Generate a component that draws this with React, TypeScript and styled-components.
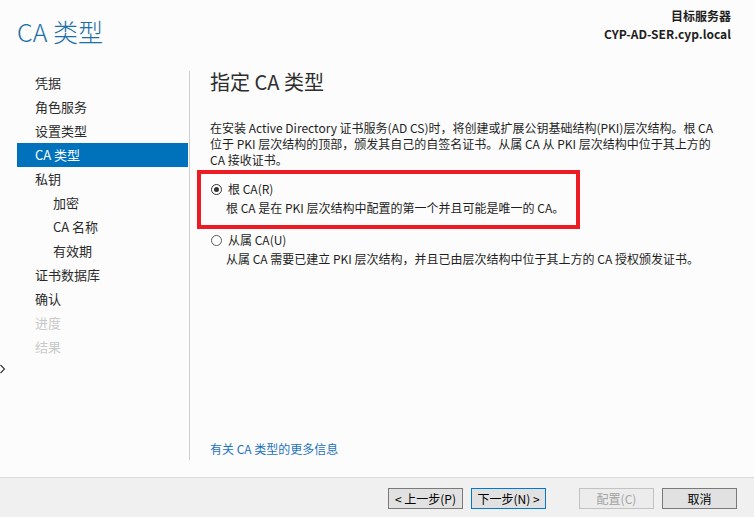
import styled, { createGlobalStyle } from "styled-components";

const GlobalStyle = createGlobalStyle`
  html, body {
    margin: 0;
    padding: 0;
    background: #fcfcfc;
  }
  body {
    font-family: "Noto Sans CJK SC", "Noto Sans", "Liberation Sans", sans-serif;
    color: #1e1e1e;
  }
`;

const Window = styled.div`
  width: 754px;
  height: 517px;
  display: flex;
  flex-direction: column;
  background: #fcfcfc;
  overflow: hidden;
`;

const Header = styled.div`
  height: 71px;
  display: flex;
  justify-content: space-between;
  align-items: flex-start;
  padding: 0 23px 0 17px;
  box-sizing: border-box;
`;

const PageTitle = styled.div`
  margin-top: 15px;
  font-size: 25px;
  line-height: 32px;
  font-weight: 300;
  color: #1b6fa6;
`;

const ServerInfo = styled.div`
  margin-top: 7px;
  text-align: right;
  font-size: 12px;
  line-height: 18px;
  font-weight: 700;
  color: #1e1e1e;
`;

const Body = styled.div`
  flex: 1;
  display: flex;
  min-height: 0;
`;

const Sidebar = styled.div`
  width: 190px;
  display: flex;
  flex-direction: column;
  margin-bottom: 17px;
  border-right: 1px solid #cfcfcf;
  box-sizing: border-box;
`;

const NavList = styled.div`
  display: flex;
  flex-direction: column;
  padding-left: 17px;
`;

const NavItem = styled.div<{ $level?: number; $active?: boolean; $disabled?: boolean }>`
  height: 24px;
  line-height: 24px;
  width: 171px;
  font-size: 13px;
  padding-left: ${(p) => (p.$level === 1 ? 36 : 18)}px;
  box-sizing: border-box;
  background: ${(p) => (p.$active ? "#0072bc" : "transparent")};
  color: ${(p) => (p.$active ? "#ffffff" : p.$disabled ? "#c9c9c9" : "#2b2b2b")};
`;

const Collapse = styled.div`
  margin-top: 5px;
  height: 10px;
  display: flex;
  align-items: center;
`;

const Main = styled.div`
  flex: 1;
  display: flex;
  flex-direction: column;
  padding: 0 20px 20px 20px;
`;

const SectionTitle = styled.div`
  font-size: 20px;
  line-height: 22px;
  color: #2e2e2e;
`;

const Intro = styled.p`
  margin: 27px 0 0 0;
  font-size: 12px;
  line-height: 16px;
  color: #1e1e1e;
`;

const Option = styled.div<{ $highlight?: boolean }>`
  margin: ${(p) => (p.$highlight ? "2px 0 0 -13px" : "3px 0 0 0")};
  width: ${(p) => (p.$highlight ? "383px" : "auto")};
  box-sizing: border-box;
  border: ${(p) => (p.$highlight ? "4px solid #ed1c24" : "none")};
  padding: ${(p) => (p.$highlight ? "7px 10px 9px 10px" : "0 0 0 1px")};
`;

const OptionRow = styled.label`
  display: flex;
  align-items: center;
  gap: 6px;
  font-size: 12px;
  line-height: 16px;
  color: #1e1e1e;
`;

const Radio = styled.span<{ $checked?: boolean }>`
  width: 11px;
  height: 11px;
  border-radius: 50%;
  border: 1px solid ${(p) => (p.$checked ? "#333333" : "#5a5a5a")};
  background: #ffffff;
  box-sizing: border-box;
  display: flex;
  align-items: center;
  justify-content: center;
  &::after {
    content: "";
    width: 5px;
    height: 5px;
    border-radius: 50%;
    background: ${(p) => (p.$checked ? "#333333" : "transparent")};
  }
`;

const OptionDesc = styled.div`
  margin-top: 3px;
  padding-left: 15px;
  font-size: 12px;
  line-height: 16px;
  color: #1e1e1e;
`;

const Spacer = styled.div`
  flex: 1;
`;

const MoreLink = styled.a`
  font-size: 12px;
  line-height: 16px;
  color: #1e73be;
  text-decoration: none;
  cursor: pointer;
`;

const Footer = styled.div`
  height: 40px;
  border-top: 1px solid #dadada;
  background: #f0f0f0;
  display: flex;
  align-items: flex-start;
  justify-content: flex-end;
  padding: 10px 17px 0 0;
  box-sizing: border-box;
  gap: 8px;
`;

const Button = styled.button<{ $default?: boolean; $gapBefore?: number }>`
  width: 75px;
  height: 21px;
  margin-left: ${(p) => p.$gapBefore ?? 0}px;
  padding: 0;
  font-family: inherit;
  font-size: 12px;
  line-height: 19px;
  color: #000000;
  background: #e1e1e1;
  border: 1px solid ${(p) => (p.$default ? "#0078d7" : "#7a7a7a")};
  box-sizing: border-box;
  &:disabled {
    background: #ececec;
    border-color: #c2c2c2;
    color: #a3a3a3;
  }
`;

const navItems = [
  { label: "凭据" },
  { label: "角色服务" },
  { label: "设置类型" },
  { label: "CA 类型", active: true },
  { label: "私钥" },
  { label: "加密", level: 1 },
  { label: "CA 名称", level: 1 },
  { label: "有效期", level: 1 },
  { label: "证书数据库" },
  { label: "确认" },
  { label: "进度", disabled: true },
  { label: "结果", disabled: true },
];

export default function App() {
  return (
    <>
      <GlobalStyle />
      <Window>
        <Header>
          <PageTitle>CA 类型</PageTitle>
          <ServerInfo>
            <div>目标服务器</div>
            <div>CYP-AD-SER.cyp.local</div>
          </ServerInfo>
        </Header>
        <Body>
          <Sidebar>
            <NavList>
              {navItems.map((item) => (
                <NavItem
                  key={item.label}
                  $level={item.level}
                  $active={item.active}
                  $disabled={item.disabled}
                >
                  {item.label}
                </NavItem>
              ))}
            </NavList>
            <Collapse>
              <svg width="6" height="10" viewBox="0 0 6 10">
                <path d="M0.5 1 L4.5 5 L0.5 9" fill="none" stroke="#333" strokeWidth="1.1" />
              </svg>
            </Collapse>
          </Sidebar>
          <Main>
            <SectionTitle>指定 CA 类型</SectionTitle>
            <Intro>
              在安装 Active Directory 证书服务(AD CS)时，将创建或扩展公钥基础结构(PKI)层次结构。根 CA
              <br />
              位于 PKI 层次结构的顶部，颁发其自己的自签名证书。从属 CA 从 PKI 层次结构中位于其上方的
              <br />
              CA 接收证书。
            </Intro>
            <Option $highlight>
              <OptionRow>
                <Radio $checked />
                根 CA(R)
              </OptionRow>
              <OptionDesc>根 CA 是在 PKI 层次结构中配置的第一个并且可能是唯一的 CA。</OptionDesc>
            </Option>
            <Option>
              <OptionRow>
                <Radio />
                从属 CA(U)
              </OptionRow>
              <OptionDesc>从属 CA 需要已建立 PKI 层次结构，并且已由层次结构中位于其上方的 CA 授权颁发证书。</OptionDesc>
            </Option>
            <Spacer />
            <MoreLink>有关 CA 类型的更多信息</MoreLink>
          </Main>
        </Body>
        <Footer>
          <Button>&lt; 上一步(P)</Button>
          <Button $default>下一步(N) &gt;</Button>
          <Button disabled $gapBefore={25}>配置(C)</Button>
          <Button>取消</Button>
        </Footer>
      </Window>
    </>
  );
}
